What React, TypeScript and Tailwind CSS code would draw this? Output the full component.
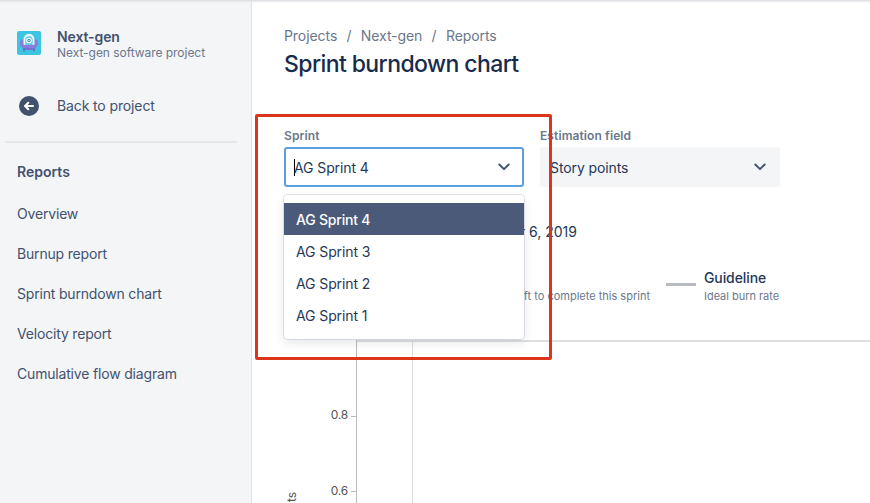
import type { ReactNode } from "react";

const reports = [
  "Overview",
  "Burnup report",
  "Sprint burndown chart",
  "Velocity report",
  "Cumulative flow diagram",
];

const sprints = ["AG Sprint 4", "AG Sprint 3", "AG Sprint 2", "AG Sprint 1"];

export default function App() {
  return (
    <div className="relative flex h-[503px] w-[870px] overflow-hidden bg-white font-['Inter',sans-serif] text-sm leading-5 tracking-[-0.1px] text-[#253858]">
      <Sidebar />
      <main className="flex min-w-0 flex-1 flex-col pl-8 pt-[26px]">
        <nav className="flex gap-[9.3px] tracking-[-0.07px] text-[#6b778c]">
          <span>Projects</span>
          <span>/</span>
          <span>Next-gen</span>
          <span>/</span>
          <span>Reports</span>
        </nav>
        <h1 className="mt-1 text-[23px] font-medium leading-7 tracking-[-0.59px] text-[#172b4d]">
          Sprint burndown chart
        </h1>

        <div className="mt-[50px] flex gap-4">
          <Field label="Sprint">
            <div className="relative flex h-10 items-center justify-between rounded-[3px] border-2 border-[#5c9fe0] bg-white pl-2 pr-[11px]">
              <span className="flex items-center">
                <span className="h-[17px] w-px bg-black" />
                <span className="-ml-px pt-[2px]">AG Sprint 4</span>
              </span>
              <Chevron />
              <SprintMenu />
            </div>
          </Field>
          <Field label="Estimation field">
            <div className="flex h-10 items-center justify-between rounded-[3px] bg-[#f4f5f7] pl-[10px] pr-[13px]">
              <span className="pt-[2px]">Story points</span>
              <Chevron />
            </div>
          </Field>
        </div>

        <p className="mt-[35px] w-[293px] text-right tracking-normal">r 6, 2019</p>

        <div className="mt-[26px] flex">
          <div className="w-[366px] pt-5 text-right text-[11px] leading-4 tracking-normal text-[#6b778c]">
            left to complete this sprint
          </div>
          <div className="ml-4 mt-[15px] h-[3px] w-[30px] bg-[#b8bcc2]" />
          <div className="ml-2">
            <div className="font-medium">Guideline</div>
            <div className="text-[11px] leading-4 tracking-[-0.03px] text-[#6b778c]">
              Ideal burn rate
            </div>
          </div>
        </div>

        <Chart />
      </main>

      {/* top bar shadow */}
      <div className="absolute inset-x-0 top-0 h-[3px] bg-linear-to-b from-[#dcdde1] to-transparent" />
      {/* highlighted area */}
      <div className="absolute left-[255px] top-[114px] h-[246px] w-[297px] rounded-[2px] border-3 border-[#dd3519]" />
    </div>
  );
}

function Sidebar() {
  return (
    <aside className="flex w-[252px] shrink-0 flex-col border-r border-[#dfe1e6] bg-[#f4f5f7] pt-7 tracking-[-0.18px] text-[#42526e]">
      <div className="flex gap-4 pl-[17px]">
        <ProjectAvatar />
        <div>
          <div className="leading-[18px] font-semibold tracking-[-0.1px]">
            Next-gen
          </div>
          <div className="text-xs leading-[14px] tracking-[-0.04px] text-[#6b778c]">
            Next-gen software project
          </div>
        </div>
      </div>

      <div className="mt-9 flex items-center gap-[18px] pl-[19px]">
        <svg width="20" height="20" viewBox="0 0 20 20" fill="none">
          <circle cx="10" cy="10" r="10" fill="#42526e" />
          <path
            d="M14 10H6.5M9.3 6.8L6 10l3.3 3.2"
            stroke="#fff"
            strokeWidth="2"
            strokeLinecap="round"
            strokeLinejoin="round"
          />
        </svg>
        <span className="tracking-[-0.12px]">Back to project</span>
      </div>

      <div className="ml-[5px] mr-[14px] mt-[25px] h-[2px] bg-[#e4e6ea]" />

      <div className="mt-[19px] pl-[17px] font-semibold tracking-normal">
        Reports
      </div>
      <ul className="mt-3 pl-[17px]">
        {reports.map((name) => (
          <li key={name} className="flex h-10 items-center">
            {name}
          </li>
        ))}
      </ul>
    </aside>
  );
}

function ProjectAvatar() {
  return (
    <svg className="mt-[3px]" width="24" height="24" viewBox="0 0 24 24" fill="none">
      <rect width="24" height="24" rx="2" fill="#3cc4e0" />
      <path d="M7 17v3.500M17 17v3.500" stroke="#5f57b8" strokeWidth="1.200" />
      <path
        d="M6 8C2.500 9 2 13.500 4.500 16c1.800 1.900 4.500 2.800 7.500 2.800s5.700-.9 7.500-2.800C22 13.500 21.500 9 18 8z"
        fill="#8b7bdc"
      />
      <path d="M6.500 14V9a5.500 6.200 0 0 1 11 0v5z" fill="#e6f8fb" />
      <path d="M8.300 14V9.500a3.700 4.200 0 0 1 7.400 0V14z" fill="#62cbe4" />
      <circle cx="12" cy="9.500" r="2.300" fill="#2f8fc0" stroke="#fff" strokeWidth="1.100" />
      <circle cx="12" cy="9.500" r="0.700" fill="#fff" />
      <path d="M4.500 13.200c4.500 1.300 10.500 1.300 15 0l-1.500 4c-3 1.600-9 1.600-12 0z" fill="#8b7bdc" />
      <path d="M6.500 18h11" stroke="#6a5fc4" strokeWidth="1" />
    </svg>
  );
}

function Field({ label, children }: { label: string; children: ReactNode }) {
  return (
    <div className="w-60">
      <div className="mb-[3px] text-xs leading-4 font-semibold tracking-[0.1px] text-[#6b778c]">
        {label}
      </div>
      {children}
    </div>
  );
}

function Chevron() {
  return (
    <svg width="14" height="10" viewBox="0 0 14 10" fill="none">
      <path
        d="M2.300 2.500L7 7.200l4.700-4.700"
        stroke="#42526e"
        strokeWidth="1.900"
        strokeLinecap="round"
        strokeLinejoin="round"
      />
    </svg>
  );
}

function SprintMenu() {
  return (
    <ul className="absolute -left-[2px] top-[46px] z-10 w-60 rounded-[4px] bg-white py-2 shadow-[0_0_0_1px_rgba(9,30,66,0.12),0_4px_11px_rgba(9,30,66,0.1)]">
      {sprints.map((name, i) => (
        <li
          key={name}
          className={`flex h-8 items-center pl-3 pt-[2px] ${
            i === 0 ? "bg-[#4a5a78] font-medium tracking-[-0.2px] text-white" : ""
          }`}
        >
          {name}
        </li>
      ))}
    </ul>
  );
}

function Chart() {
  return (
    <svg className="mt-9" width="586" height="163" viewBox="0 0 586 163">
      <path d="M72 1h514" stroke="#dfdfdf" strokeWidth="2" />
      <path d="M128.500 0v163" stroke="#dcdcdc" strokeWidth="1" />
      <path d="M72.500 0v163M67 76.500h5M67 151.500h5" stroke="#bbb" strokeWidth="1" />
      <g
        className="font-['Inter',sans-serif] text-[12px] tracking-[-0.2px]"
        fill="#555"
        textAnchor="end"
      >
        <text x="64" y="79">
          0.8
        </text>
        <text x="64" y="155">
          0.6
        </text>
      </g>
      <text
        className="font-['Inter',sans-serif] text-[12px]"
        fill="#555"
        textAnchor="end"
        transform="translate(12 152) rotate(-90)"
      >
        ts
      </text>
    </svg>
  );
}
